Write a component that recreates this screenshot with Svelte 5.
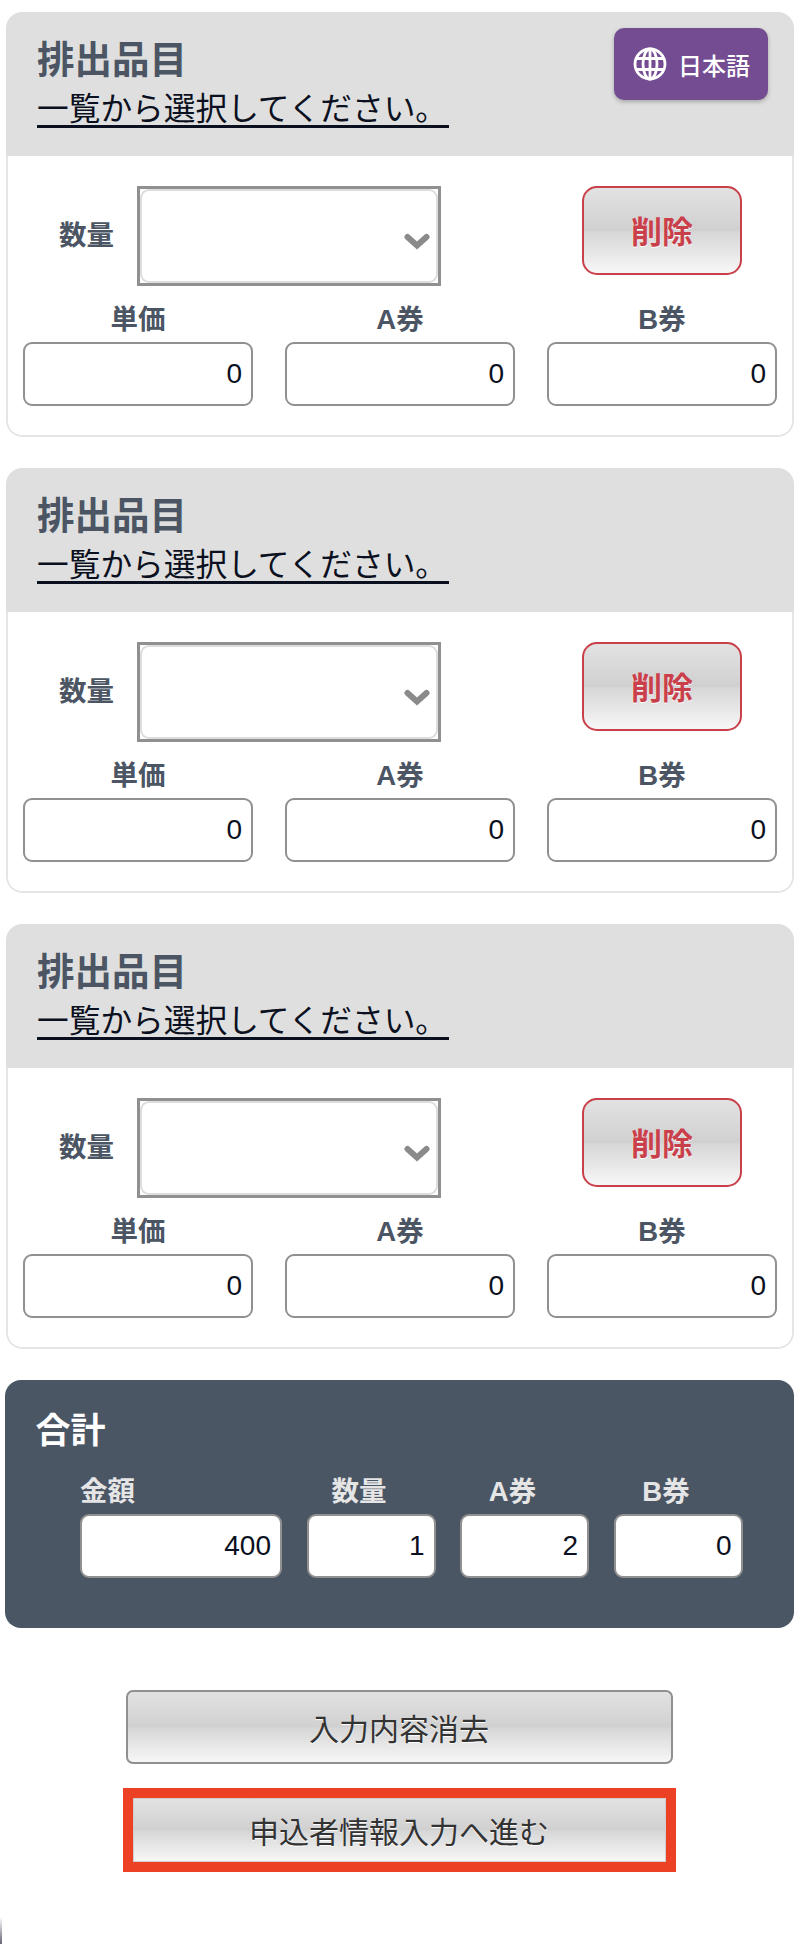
<script>
  let items = [1, 2, 3];
  let totals = [
    { label: "金額", value: 400 },
    { label: "数量", value: 1 },
    { label: "A券", value: 2 },
    { label: "B券", value: 0 }
  ];
</script>

<div class="page">
  {#each items as item, i}
    <section class="card">
      <div class="card-head">
        <h2>排出品目</h2>
        <a class="pick" href="#top">一覧から選択してください。</a>
        {#if i === 0}
          <button class="lang">
            <svg viewBox="0 0 34 34" width="34" height="34" fill="none" stroke="#fff" stroke-width="2.8">
              <circle cx="17" cy="17" r="15" />
              <ellipse cx="17" cy="17" rx="7" ry="15" />
              <path d="M4 11.5h26M4 22.5h26M17 2v30" />
            </svg>
            日本語
          </button>
        {/if}
      </div>
      <div class="card-body">
        <div class="top-row">
          <span class="label qty">数量</span>
          <div class="select">
            <div class="select-inner">
              <svg viewBox="0 0 26 17" width="26" height="17" fill="none" stroke="#8a8a8a" stroke-width="6" stroke-linecap="round">
                <path d="M3.5 4l9.500 8.500 9.500-8.500" />
              </svg>
            </div>
          </div>
          <button class="btn del">削除</button>
        </div>
        <div class="fields">
          <div class="field"><span class="label">単価</span><input value="0" readonly /></div>
          <div class="field"><span class="label">A券</span><input value="0" readonly /></div>
          <div class="field"><span class="label">B券</span><input value="0" readonly /></div>
        </div>
      </div>
    </section>
  {/each}

  <section class="total">
    <h3>合計</h3>
    <div class="total-grid">
      {#each totals as t, i}
        <div class="total-cell">
          <span class="label" class:first={i === 0}>{t.label}</span>
          <input value={t.value} readonly />
        </div>
      {/each}
    </div>
  </section>

  <div class="actions">
    <button class="btn clear">入力内容消去</button>
    <div class="mark">
      <button class="btn next">申込者情報入力へ進む</button>
    </div>
  </div>
  <div class="corner"></div>
</div>

<style>
  :global(body) {
    background: #fff;
  }
  .page {
    padding: 12px 0 0 6px;
    font-family: "Liberation Sans", "Noto Sans CJK JP", sans-serif;
    color: #0b1020;
  }
  .card {
    height: 425px;
    box-sizing: border-box;
    margin-bottom: 31px;
    border-radius: 16px;
    overflow: hidden;
    background: #fff;
  }
  .card-head {
    position: relative;
    height: 144px;
    padding: 25px 0 0 31px;
    box-sizing: border-box;
    background: #dfdfdf;
  }
  h2 {
    margin: 0;
    font-size: 37.5px;
    line-height: 46px;
    font-weight: 700;
    color: #4b5563;
  }
  .pick {
    display: block;
    width: 412px;
    height: 43px;
    margin-top: 2px;
    box-sizing: border-box;
    border-bottom: 3px solid #0b1020;
    font-size: 31.7px;
    line-height: 48px;
    white-space: nowrap;
    color: #0b1020;
    text-decoration: none;
  }
  .lang {
    position: absolute;
    top: 16px;
    right: 26px;
    width: 154px;
    height: 72px;
    display: flex;
    align-items: center;
    gap: 11px;
    padding: 0 0 0 19px;
    border: none;
    border-radius: 10px;
    background: #744c92;
    box-shadow: 0 2px 4px rgba(0, 0, 0, 0.25);
    color: #fff;
    font-family: inherit;
    font-size: 24px;
    font-weight: 500;
  }
  .card-body {
    height: 281px;
    box-sizing: border-box;
    padding: 30px 15px 0;
    border: 2px solid #e5e5e5;
    border-top: none;
    border-radius: 0 0 16px 16px;
  }
  .top-row {
    display: flex;
    align-items: flex-start;
  }
  .label {
    font-size: 27.5px;
    line-height: 34px;
    font-weight: 700;
    color: #4b5563;
  }
  .qty {
    margin: 33px 23px 0 36px;
  }
  .select {
    width: 304px;
    height: 100px;
    box-sizing: border-box;
    border: 3px solid #909090;
    background: #fff;
  }
  .select-inner {
    height: 100%;
    box-sizing: border-box;
    padding: 42px 0 0 262px;
    border: 2px solid #ddd;
    border-radius: 9px;
  }
  .select svg {
    display: block;
  }
  .btn {
    font-family: inherit;
    cursor: pointer;
    background: linear-gradient(#e2e2e2 0%, #d0d0d0 50%, #d6d6d6 51%, #f7f7f7 100%);
    text-shadow: 0 1px 1px #fff;
  }
  .del {
    width: 160px;
    height: 89px;
    margin-left: 141px;
    border: 2.500px solid #c9404a;
    border-radius: 15px;
    color: #c9404a;
    font-size: 31px;
    font-weight: 700;
    padding: 0 0 2px;
  }
  .fields {
    display: flex;
    gap: 32px;
    margin-top: 17px;
  }
  .field {
    width: 230px;
    display: flex;
    flex-direction: column;
    align-items: center;
    gap: 5px;
  }
  input {
    width: 100%;
    height: 64px;
    box-sizing: border-box;
    padding: 0 9px 0 0;
    border: 2px solid #909090;
    border-radius: 9px;
    background: #fff;
    color: #0b1020;
    font-family: inherit;
    font-size: 28px;
    text-align: right;
  }
  .total {
    height: 248px;
    box-sizing: border-box;
    margin-left: -1px;
    padding: 29px 0 0 30.5px;
    border-radius: 16px;
    background: #4b5665;
  }
  h3 {
    margin: 0;
    font-size: 35px;
    line-height: 44px;
    font-weight: 700;
    color: #fff;
  }
  .total-grid {
    display: grid;
    grid-template-columns: 202px 129px 129px 129px;
    gap: 24.5px;
    margin: 22px 0 0 44.5px;
  }
  .total-cell {
    display: flex;
    flex-direction: column;
    gap: 5px;
  }
  .total-cell .label {
    color: #e5e5e5;
    text-align: center;
    padding-right: 24px;
  }
  .total-cell .label.first {
    text-align: left;
    padding-right: 0;
  }
  .actions {
    display: flex;
    flex-direction: column;
    align-items: center;
    width: 786px;
    margin-top: 62px;
  }
  .clear {
    width: 547px;
    height: 74px;
    border: 2px solid #909090;
    border-radius: 7px;
    color: #333;
    font-size: 30px;
  }
  .mark {
    margin-top: 24px;
    padding: 10px;
    background: #ec4124;
  }
  .next {
    display: block;
    width: 533px;
    height: 64px;
    border: 1px solid #cfcfcf;
    color: #333;
    font-size: 30px;
  }
  .corner {
    width: 2px;
    height: 27px;
    margin: 45px 0 0 -6px;
    background: linear-gradient(#fff, #667);
  }
</style>
